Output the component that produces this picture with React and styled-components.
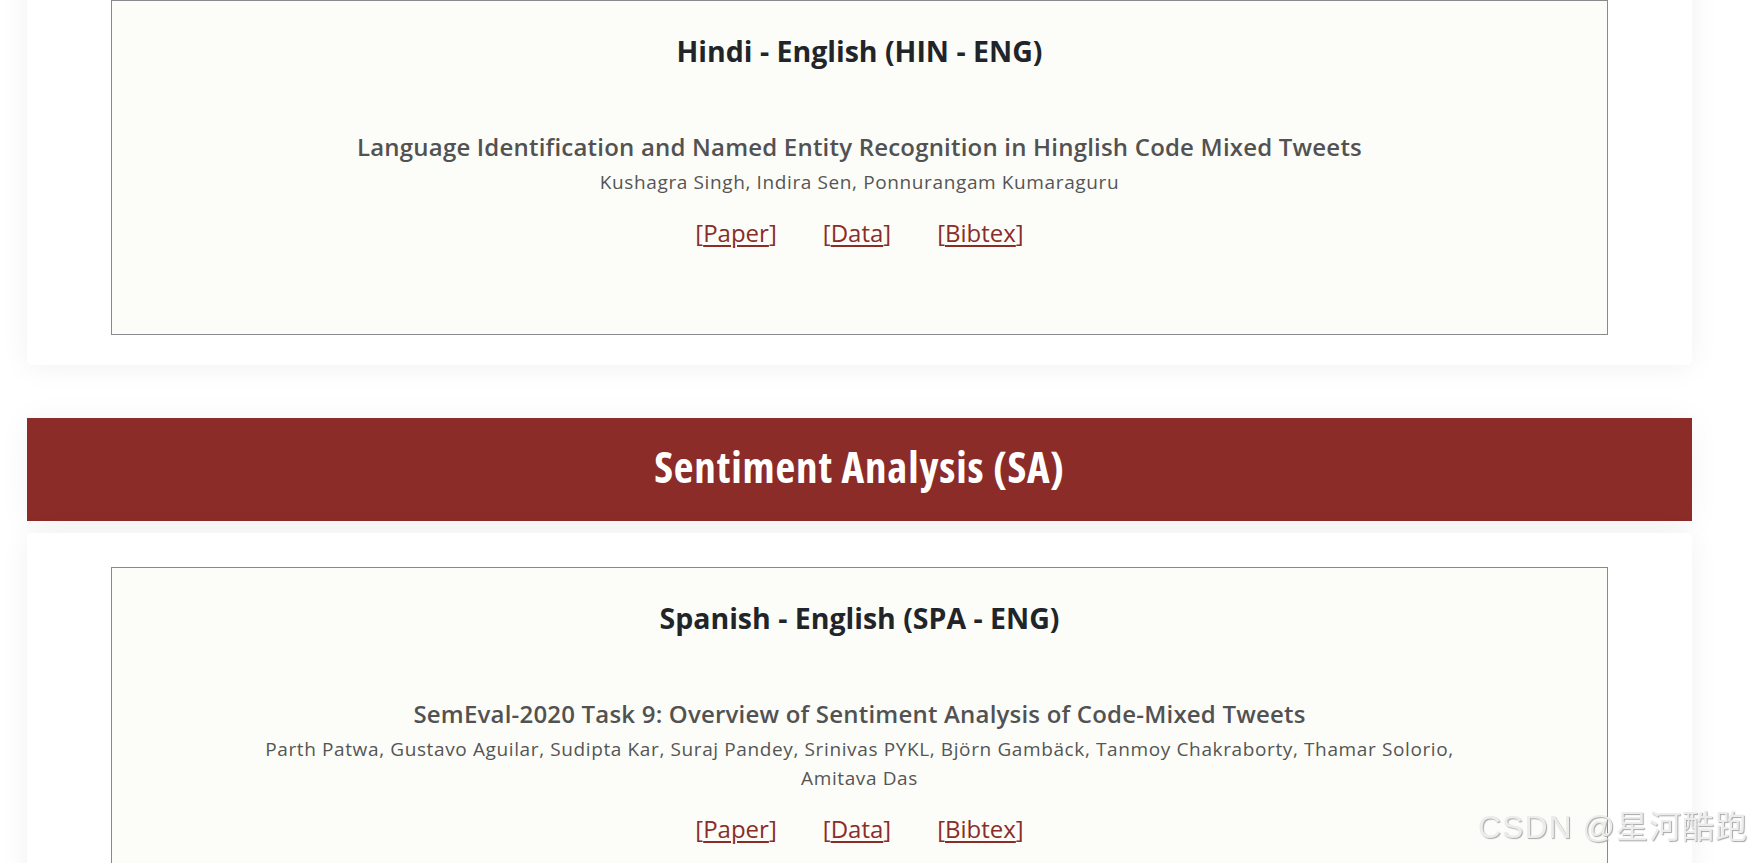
import React from "react";
import styled, { createGlobalStyle } from "styled-components";

const GlobalStyle = createGlobalStyle`
  html, body { margin: 0; padding: 0; background: #ffffff; }
  body {
    font-family: "Open Sans", "Noto Sans", sans-serif;
    color: #212529;
    overflow: hidden;
  }
`;

const Main = styled.main`
  width: 1665px;
  margin: -34px 0 0 27px;
  display: flex;
  flex-direction: column;
`;

const Card = styled.section`
  background: #ffffff;
  border-radius: 5px;
  box-shadow: 0 2px 30px rgba(0, 0, 0, 0.06);
  padding: 34px 84px 30px;
`;

const Banner = styled.div`
  margin: 53px 0 12px;
  height: 103px;
  box-sizing: border-box;
  padding-bottom: 5px;
  background: #8c2c29;
  box-shadow: 0 2px 30px rgba(0, 0, 0, 0.05);
  display: flex;
  align-items: center;
  justify-content: center;
`;

const BannerTitle = styled.h1`
  margin: 0;
  color: #ffffff;
  font-size: 43px;
  font-weight: 700;
  font-stretch: condensed;
  letter-spacing: 0.85px;
  line-height: 48px;
`;

const Box = styled.div`
  border: 1px solid #8a8a8e;
  background: #fcfdf8;
  padding: 33px 20px 83px;
  display: flex;
  flex-direction: column;
  align-items: center;
  text-align: center;
`;

const LangTitle = styled.h3`
  margin: 0 0 61px;
  font-size: 28.5px;
  font-weight: 700;
  line-height: 34px;
  color: #212529;
`;

const Paper = styled.article`
  width: 1216px;
  display: flex;
  flex-direction: column;
  align-items: center;
`;

const PaperTitle = styled.h4`
  margin: 0;
  font-size: 24px;
  font-weight: 600;
  letter-spacing: 0.2px;
  line-height: 36px;
  color: #525252;
`;

const Authors = styled.p`
  margin: 3px 0 0;
  font-size: 19px;
  letter-spacing: 0.62px;
  line-height: 28.5px;
  color: #555555;
`;

const Links = styled.div`
  margin-top: 18.5px;
  display: flex;
  gap: 46px;
  font-size: 24px;
  line-height: 36px;
  color: #8b2c29;
`;

const LinkItem = styled.span`
  white-space: nowrap;
`;

const Anchor = styled.a`
  color: #8b2c29;
  text-decoration: underline;
  text-decoration-thickness: 2px;
  text-underline-offset: 3px;
`;

const Watermark = styled.div`
  position: fixed;
  right: 4px;
  bottom: 16px;
  font-family: "Liberation Sans", "Noto Sans CJK SC", sans-serif;
  font-size: 32px;
  letter-spacing: 1px;
  color: #ececec;
  text-shadow: 1px 1px 1px #a8a8a8;
  pointer-events: none;
`;

const sections = [
  {
    lang: "Hindi - English (HIN - ENG)",
    title: "Language Identification and Named Entity Recognition in Hinglish Code Mixed Tweets",
    authors: "Kushagra Singh, Indira Sen, Ponnurangam Kumaraguru",
  },
  {
    banner: "Sentiment Analysis (SA)",
    lang: "Spanish - English (SPA - ENG)",
    title: "SemEval-2020 Task 9: Overview of Sentiment Analysis of Code-Mixed Tweets",
    authors:
      "Parth Patwa, Gustavo Aguilar, Sudipta Kar, Suraj Pandey, Srinivas PYKL, Björn Gambäck, Tanmoy Chakraborty, Thamar Solorio, Amitava Das",
  },
];

const linkNames = ["Paper", "Data", "Bibtex"];

export default function App() {
  return (
    <>
      <GlobalStyle />
      <Main>
        {sections.map((s) => (
          <React.Fragment key={s.lang}>
            {s.banner && (
              <Banner>
                <BannerTitle>{s.banner}</BannerTitle>
              </Banner>
            )}
            <Card>
              <Box>
                <LangTitle>{s.lang}</LangTitle>
                <Paper>
                  <PaperTitle>{s.title}</PaperTitle>
                  <Authors>{s.authors}</Authors>
                  <Links>
                    {linkNames.map((n) => (
                      <LinkItem key={n}>
                        [<Anchor href="#">{n}</Anchor>]
                      </LinkItem>
                    ))}
                  </Links>
                </Paper>
              </Box>
            </Card>
          </React.Fragment>
        ))}
      </Main>
      <Watermark>CSDN @星河酷跑</Watermark>
    </>
  );
}
